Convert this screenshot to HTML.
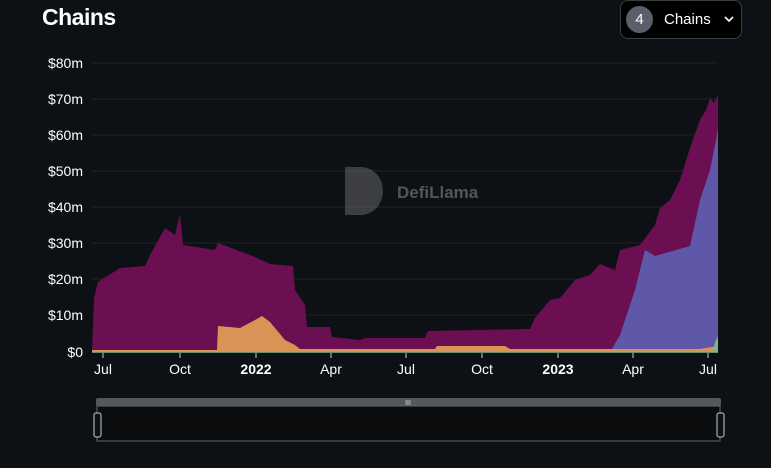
<!DOCTYPE html><html><head><style>
body{margin:0;width:771px;height:468px;background:#0d1014;font-family:"Liberation Sans",sans-serif;overflow:hidden;position:relative}
.t{position:absolute;left:42px;top:4px;color:#fff;font-size:23px;font-weight:bold;letter-spacing:-0.5px}
.btn{position:absolute;left:620px;top:0;width:122px;height:39px;border:1px solid #3a3d42;border-radius:8px;background:#000;box-sizing:border-box}
.btn .c{position:absolute;left:5px;top:5px;width:27px;height:27px;border-radius:50%;background:#5b5e6b;color:#fff;font-size:15px;text-align:center;line-height:27px}
.btn .l{position:absolute;left:43px;top:10px;color:#fff;font-size:15px}
svg{position:absolute;left:0;top:0}
</style></head><body>
<div class="t">Chains</div>
<div class="btn"><div class="c">4</div><div class="l">Chains</div><svg style="left:103px;top:14px" width="10" height="8"><path d="M1 2l4 4 4-4" stroke="#fff" stroke-width="1.6" fill="none"/></svg></div>
<svg width="771" height="468" font-family="Liberation Sans,sans-serif">
<g stroke="#1e2228" stroke-width="1">
<line x1="92" x2="718" y1="63" y2="63"/><line x1="92" x2="718" y1="99" y2="99"/><line x1="92" x2="718" y1="135" y2="135"/><line x1="92" x2="718" y1="171" y2="171"/><line x1="92" x2="718" y1="207" y2="207"/><line x1="92" x2="718" y1="243" y2="243"/><line x1="92" x2="718" y1="279" y2="279"/><line x1="92" x2="718" y1="315" y2="315"/></g>
<g fill="#fff" font-size="14" text-anchor="end">
<text x="83" y="68">$80m</text><text x="83" y="104">$70m</text><text x="83" y="140">$60m</text><text x="83" y="176">$50m</text><text x="83" y="212">$40m</text><text x="83" y="248">$30m</text><text x="83" y="284">$20m</text><text x="83" y="320">$10m</text><text x="83" y="357">$0</text></g>
<path fill="#6b0f52" d="M92 352L94 298L98 282L120 268L145 266L150 255L165 228L175 235L180 214L183 245L215 250L218 243L255 257L270 264L293 266L295 290L305 305L307 327L330 327L332 337L360 340L365 338L425 338L428 331L530 329L535 318L550 300L560 298L575 280L590 275L600 264L615 270L620 250L640 245L655 225L660 208L670 200L680 180L690 148L700 120L706 110L710 98L714 103L718 95L718 352Z"/>
<path fill="#5f57a8" d="M610 352L620 335L635 290L645 250L655 256L690 246L700 200L710 170L716 140L718 128L718 352Z"/>
<path fill="#d99354" d="M92 350L217 350L218 326L240 328L255 320L262 316L270 322L285 340L295 345L300 349L435 349L437 346L505 346L510 349L700 349L718 346L718 352L92 352Z"/>
<path fill="#7fb38a" d="M712 352L716 340L718 336L718 352Z"/>
<line x1="92" x2="718" y1="352.5" y2="352.5" stroke="#6a8f6e"/>
<g stroke="#ccc"><line x1="103" x2="103" y1="353" y2="358"/><line x1="180" x2="180" y1="353" y2="358"/><line x1="256" x2="256" y1="353" y2="358"/><line x1="331" x2="331" y1="353" y2="358"/><line x1="406" x2="406" y1="353" y2="358"/><line x1="482" x2="482" y1="353" y2="358"/><line x1="558" x2="558" y1="353" y2="358"/><line x1="633" x2="633" y1="353" y2="358"/><line x1="708" x2="708" y1="353" y2="358"/></g>
<g fill="#fff" font-size="14" text-anchor="middle">
<text x="103" y="374">Jul</text><text x="180" y="374">Oct</text><text x="256" y="374" font-weight="bold">2022</text><text x="331" y="374">Apr</text><text x="406" y="374">Jul</text><text x="482" y="374">Oct</text><text x="558" y="374" font-weight="bold">2023</text><text x="633" y="374">Apr</text><text x="708" y="374">Jul</text></g>
<g opacity="0.45"><path d="M345 167h16a22 24 0 0 1 0 48h-16z" fill="#777"/><text x="397" y="198" fill="#aaa" font-size="17" font-weight="bold">DefiLlama</text></g>
<rect x="96" y="398" width="625" height="8" rx="2" fill="#54575b"/>
<text x="408" y="405" fill="#ddd" font-size="7" text-anchor="middle">III</text>
<rect x="97" y="406" width="623" height="35" fill="#0a0c0e" stroke="#666" stroke-width="1"/>
<rect x="94" y="413" width="7" height="24" rx="2" fill="#0d1014" stroke="#ccc"/>
<rect x="717" y="413" width="7" height="24" rx="2" fill="#0d1014" stroke="#ccc"/>
</svg>
</body></html>
